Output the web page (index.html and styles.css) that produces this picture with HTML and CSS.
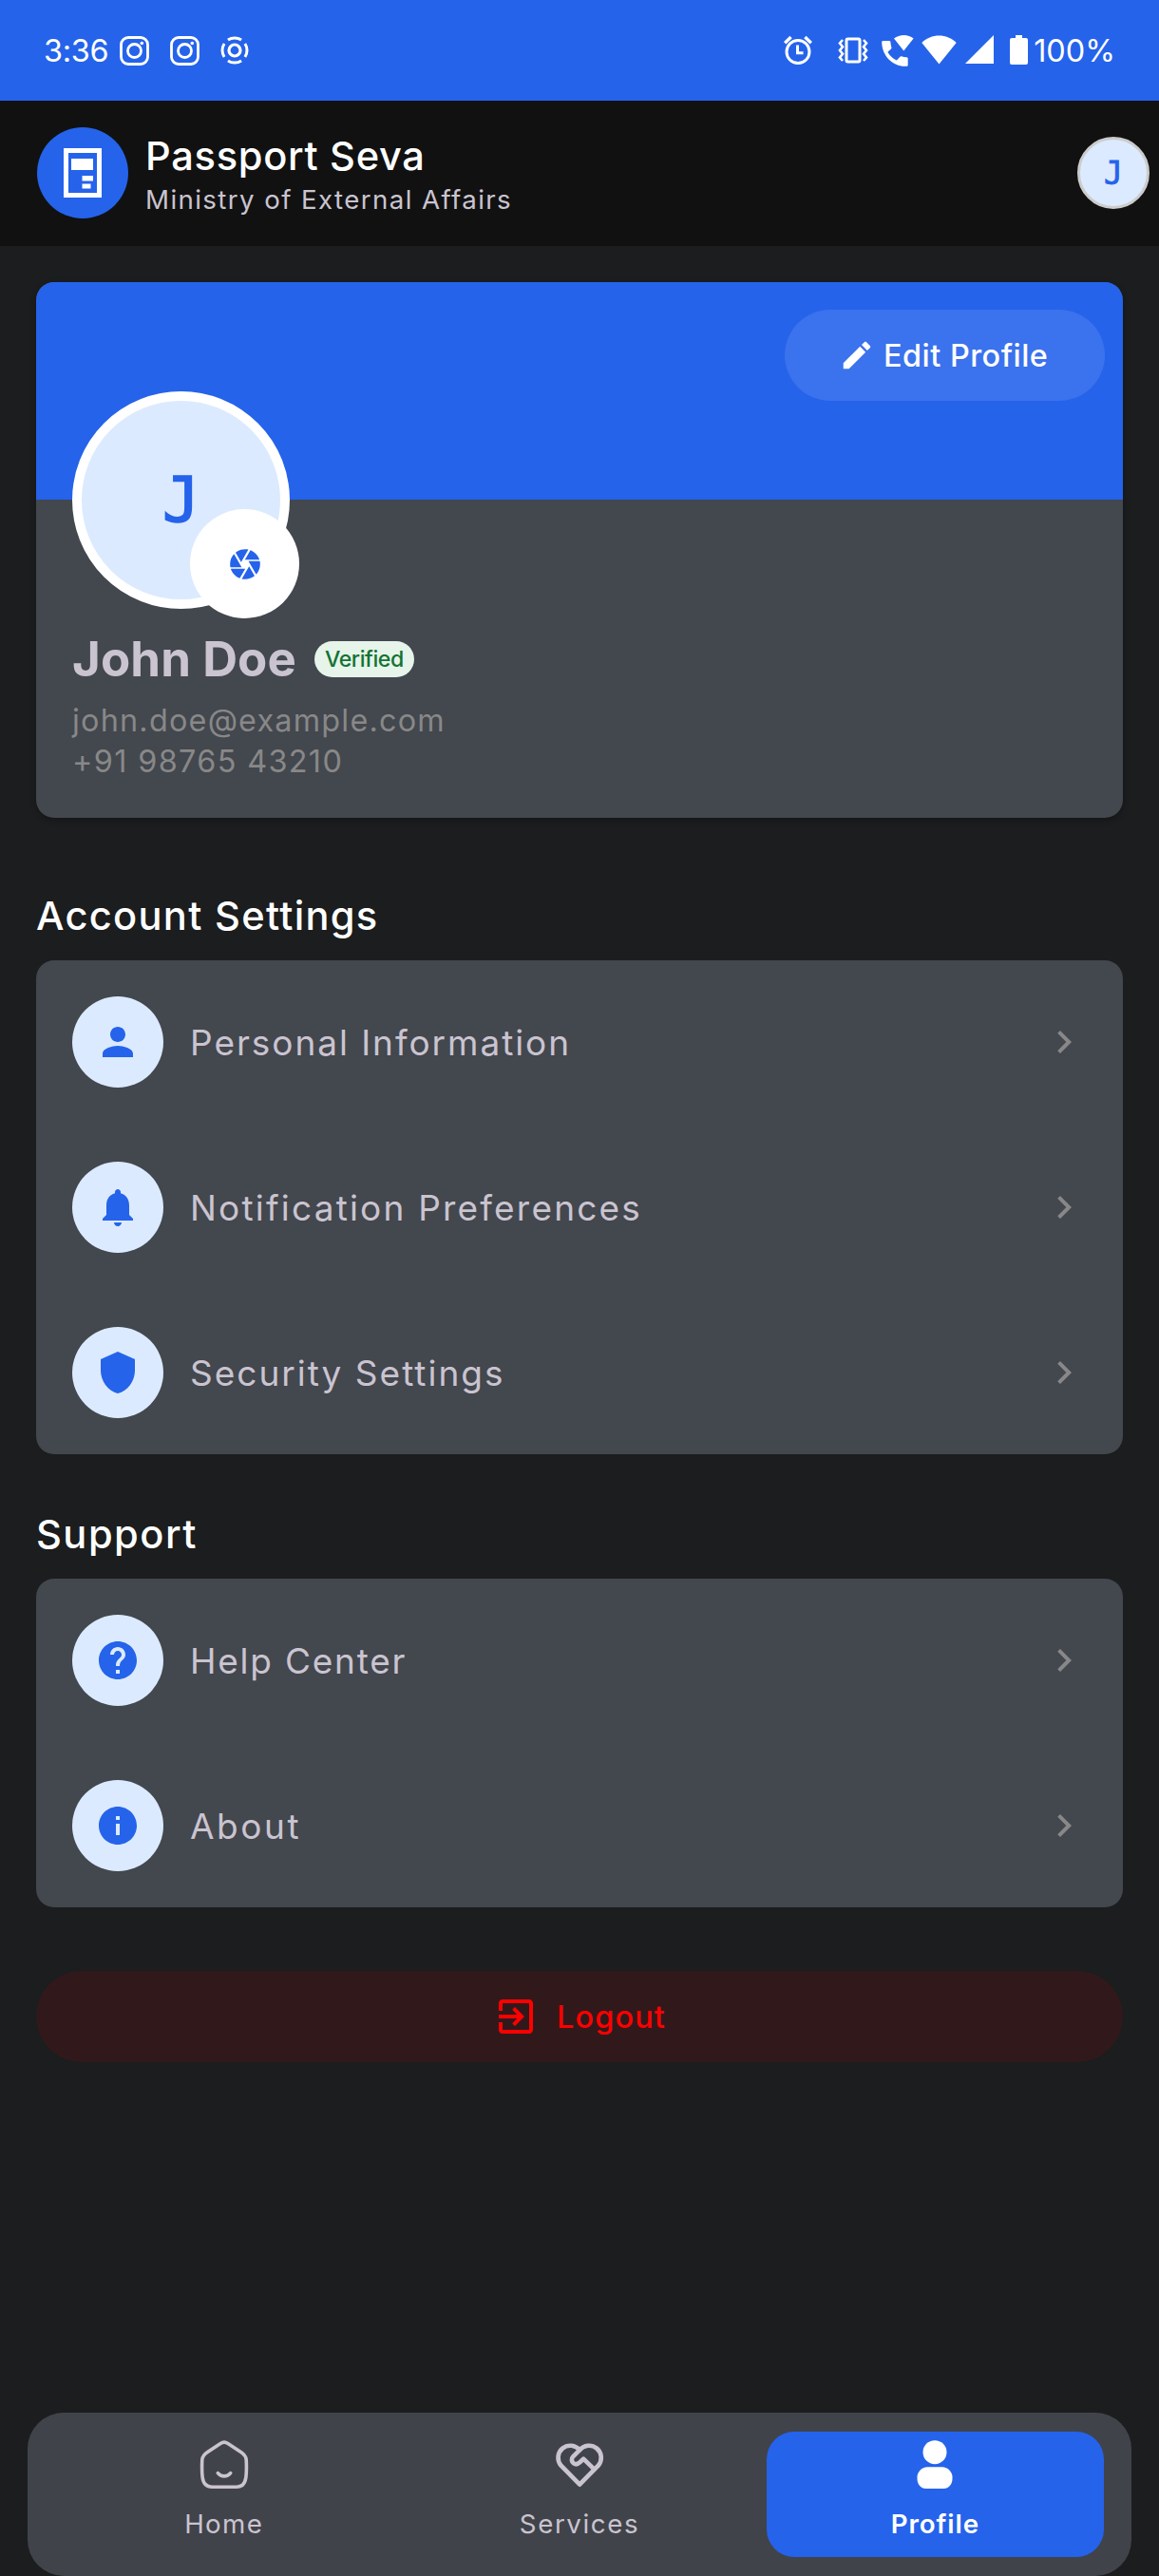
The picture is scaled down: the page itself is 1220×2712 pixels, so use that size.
FILE: index.html
```html
<!DOCTYPE html>
<html lang="en">
<head>
<meta charset="utf-8">
<title>Passport Seva – Profile</title>
<link rel="stylesheet" href="styles.css">
</head>
<body>
<div class="screen">
  <div class="status-bar">
    <span class="clock">3:36</span>
    <div class="notifications">
      <svg width="31" height="31" viewBox="0 0 31 31" fill="none" stroke="#fff" stroke-width="2.8"><rect x="1.5" y="1.5" width="28" height="28" rx="7.5"/><circle cx="15.5" cy="15.5" r="7"/><circle cx="23.3" cy="7.5" r="1.8" fill="#fff" stroke="none"/></svg>
      <svg width="31" height="31" viewBox="0 0 31 31" fill="none" stroke="#fff" stroke-width="2.8"><rect x="1.5" y="1.5" width="28" height="28" rx="7.5"/><circle cx="15.5" cy="15.5" r="7"/><circle cx="23.3" cy="7.5" r="1.8" fill="#fff" stroke="none"/></svg>
      <svg width="30" height="30" viewBox="0 0 30 30" fill="none" stroke="#fff"><circle cx="15" cy="15" r="6" stroke-width="3.2"/><circle cx="15" cy="15" r="13" stroke-width="3" pathLength="360" stroke-dasharray="66 24" stroke-dashoffset="33"/></svg>
    </div>
    <div class="indicators">
      <svg class="alarm" width="30" height="32" viewBox="0 0 30 32" fill="none" stroke="#fff"><circle cx="15" cy="17.5" r="12" stroke-width="3"/><path d="M14.5 10.5v8.2h6" stroke-width="3"/><path d="M1.2 8.2L7.6 2M28.8 8.2L22.4 2" stroke-width="3.4"/></svg>
      <svg class="vibrate" width="32" height="28" viewBox="0 0 32 28" fill="none" stroke="#fff" stroke-width="3"><rect x="9" y="2" width="14" height="24" rx="1.5"/><path d="M5 3L2 6.5l3 3.7-3 3.8 3 3.8-3 3.7L5 25M27 3l3 3.5-3 3.7 3 3.8-3 3.8 3 3.7-3 3.5" stroke-width="2.6"/></svg>
      <svg class="wifi-call" width="34" height="35" viewBox="0 0 34 35" fill="#fff"><path d="M1.5 7H8c.8 0 1.3.5 1.4 1.3.1 2 .5 3.900 1 5.600.200.500 0 1.100-.4 1.500l-3.600 3.300c2.500 4.400 5.400 6.900 9.500 8.900l3.500-3.900c.4-.4 1-.6 1.500-.4 1.700.500 3.600.9 5.500 1 .8.1 1.300.600 1.300 1.400v6.700c0 .800-.600 1.300-1.400 1.300C12.400 34.700.400 23 .200 8.400.200 7.600.700 7 1.500 7z"/><path d="M13 4.500C19 -.2 28 -.2 33.600 4.500L23.300 17.500z"/></svg>
      <svg class="wifi" width="37" height="31" viewBox="0 0 37 31" fill="#fff"><path d="M.3 8C10-2 27-2 36.700 8L18.500 30.500z"/></svg>
      <svg class="signal" width="30" height="30" viewBox="0 0 30 30" fill="#fff"><path d="M30 0v30H0z"/></svg>
      <svg class="battery" width="19" height="31" viewBox="0 0 19 31" fill="#fff"><path d="M6 0h7v3h4q2 0 2 2v24q0 2-2 2H2q-2 0-2-2V5q0-2 2-2h4z"/></svg>
      <span class="percent">100%</span>
    </div>
  </div>

  <header class="app-bar">
    <div class="logo">
      <svg width="40" height="52" viewBox="0 0 40 52" fill="#fff"><path fill-rule="evenodd" d="M0 0h40v52H0zM5 5v42h30V5z"/><path d="M8 11h23v12H8zM19.500 29H31v5.500H19.500zM19.500 37.500h9v5h-9z"/></svg>
    </div>
    <div class="brand">
      <div class="brand-title">Passport Seva</div>
      <div class="brand-subtitle">Ministry of External Affairs</div>
    </div>
    <div class="avatar-small">J</div>
  </header>

  <main class="content">
    <section class="profile-card">
      <div class="cover">
        <button class="edit-button">
          <svg width="38" height="38" viewBox="0 0 24 24" fill="#fff"><path d="M3 17.25V21h3.750L17.810 9.940l-3.750-3.750L3 17.250zM20.710 7.040c.390-.390.390-1.020 0-1.410l-2.340-2.340c-.390-.390-1.020-.390-1.410 0l-1.830 1.830 3.750 3.750 1.830-1.830z"/></svg>
          <span>Edit Profile</span>
        </button>
      </div>
      <div class="profile-body">
        <div class="avatar">J
          <div class="camera">
            <svg width="38" height="38" viewBox="0 0 24 24" fill="#2563eb"><path d="M9.400 10.500l4.770-8.260C13.470 2.090 12.750 2 12 2c-2.400 0-4.600.850-6.320 2.250l3.660 6.350.060-.1zM21.540 9c-.920-2.920-3.150-5.260-6-6.340L11.880 9h9.660zm.260 1h-7.490l.290.500 4.760 8.250C21 16.970 22 14.610 22 12c0-.690-.070-1.350-.2-2zM8.540 12l-3.900-6.750C3.010 7.030 2 9.390 2 12c0 .690.070 1.350.2 2h7.490l-1.150-2zm-6.080 3c.920 2.920 3.150 5.260 6 6.340L12.120 15H2.460zm11.270 0l-3.900 6.760c.7.150 1.420.240 2.170.240 2.400 0 4.600-.850 6.320-2.250l-3.660-6.350-.930 1.600z"/></svg>
          </div>
        </div>
        <div class="name-row">
          <h1 class="name">John Doe</h1>
          <span class="verified">Verified</span>
        </div>
        <div class="contact email">john.doe@example.com</div>
        <div class="contact phone">+91 98765 43210</div>
      </div>
    </section>

    <h2 class="section-title account-title">Account Settings</h2>
    <section class="list-card">
      <div class="row">
        <div class="row-icon"><svg width="48" height="48" viewBox="0 0 24 24"><path d="M12 12c2.210 0 4-1.790 4-4s-1.790-4-4-4-4 1.790-4 4 1.790 4 4 4zm0 2c-2.670 0-8 1.340-8 4v2h16v-2c0-2.660-5.330-4-8-4z"/></svg></div>
        <span class="row-label personal">Personal Information</span>
        <svg class="chevron" width="48" height="48" viewBox="0 0 24 24"><path d="M8.590 16.590L13.170 12 8.590 7.410 10 6l6 6-6 6z"/></svg>
      </div>
      <div class="row">
        <div class="row-icon"><svg width="48" height="48" viewBox="0 0 24 24"><path d="M12 22c1.100 0 2-.9 2-2h-4c0 1.100.890 2 2 2zm6-6v-5c0-3.070-1.640-5.640-4.500-6.320V4c0-.830-.670-1.500-1.500-1.500s-1.500.670-1.500 1.500v.680C7.630 5.360 6 7.920 6 11v5l-2 2v1h16v-1l-2-2z"/></svg></div>
        <span class="row-label">Notification Preferences</span>
        <svg class="chevron" width="48" height="48" viewBox="0 0 24 24"><path d="M8.590 16.590L13.170 12 8.590 7.410 10 6l6 6-6 6z"/></svg>
      </div>
      <div class="row">
        <div class="row-icon"><svg width="48" height="48" viewBox="0 0 24 24"><path d="M12 1L3 5v6c0 5.550 3.840 10.740 9 12 5.160-1.260 9-6.450 9-12V5l-9-4z"/></svg></div>
        <span class="row-label security">Security Settings</span>
        <svg class="chevron" width="48" height="48" viewBox="0 0 24 24"><path d="M8.590 16.590L13.170 12 8.590 7.410 10 6l6 6-6 6z"/></svg>
      </div>
    </section>

    <h2 class="section-title support-title">Support</h2>
    <section class="list-card">
      <div class="row">
        <div class="row-icon"><svg width="48" height="48" viewBox="0 0 24 24"><path d="M12 2C6.480 2 2 6.480 2 12s4.480 10 10 10 10-4.480 10-10S17.520 2 12 2zm1 17h-2v-2h2v2zm2.070-7.750l-.9.920C13.450 12.900 13 13.500 13 15h-2v-.5c0-1.100.450-2.100 1.170-2.830l1.240-1.260c.370-.360.590-.860.590-1.410 0-1.100-.9-2-2-2s-2 .9-2 2H8c0-2.210 1.790-4 4-4s4 1.790 4 4c0 .880-.360 1.680-.930 2.250z"/></svg></div>
        <span class="row-label help">Help Center</span>
        <svg class="chevron" width="48" height="48" viewBox="0 0 24 24"><path d="M8.590 16.590L13.170 12 8.590 7.410 10 6l6 6-6 6z"/></svg>
      </div>
      <div class="row">
        <div class="row-icon"><svg width="48" height="48" viewBox="0 0 24 24"><path d="M12 2C6.480 2 2 6.480 2 12s4.480 10 10 10 10-4.480 10-10S17.520 2 12 2zm1 15h-2v-6h2v6zm0-8h-2V7h2v2z"/></svg></div>
        <span class="row-label about">About</span>
        <svg class="chevron" width="48" height="48" viewBox="0 0 24 24"><path d="M8.590 16.590L13.170 12 8.590 7.410 10 6l6 6-6 6z"/></svg>
      </div>
    </section>

    <button class="logout">
      <svg width="48" height="48" viewBox="0 0 24 24" fill="#f00"><path d="M10.090 15.590L11.500 17l5-5-5-5-1.410 1.410L12.670 11H3v2h9.670l-2.580 2.590zM19 3H5c-1.110 0-2 .9-2 2v4h2V5h14v14H5v-4H3v4c0 1.100.890 2 2 2h14c1.100 0 2-.9 2-2V5c0-1.100-.9-2-2-2z"/></svg>
      <span>Logout</span>
    </button>
  </main>

  <nav class="bottom-nav">
    <div class="tab">
      <svg width="58" height="58" viewBox="0 0 58 58" fill="none" stroke="#cac4d0" stroke-width="3.600" stroke-linecap="round" stroke-linejoin="round"><path d="M25.500 6.300C27.800 4.700 30.200 4.700 32.500 6.300L46.500 15.500C50.500 18.200 52 20 52.200 23.500C52.600 31 52.600 36 51.900 42C51 49 48 52.200 42 52.200H16C10 52.200 7 49 6.100 42C5.400 36 5.400 31 5.800 23.500C6 20 7.500 18.200 11.500 15.500Z"/><path d="M22.300 37.600C26 42 32 42 35.700 37.600"/></svg>
      <span>Home</span>
    </div>
    <div class="tab">
      <svg width="58" height="58" viewBox="31.500 32 174 174" fill="none" stroke="#cac4d0" stroke-width="14" stroke-linecap="round" stroke-linejoin="round"><path d="M119 181L60 121A37.500 37.500 0 1 1 119 72A37.500 37.500 0 1 1 178 121Z"/><path d="M119 72L98 93C92 99 93 109 100 114C106 118 113 117 118 112L131 100L165 133"/></svg>
      <span class="services">Services</span>
    </div>
    <div class="tab active">
      <svg width="58" height="58" viewBox="0 0 58 58" fill="#fff"><circle cx="29" cy="15.700" r="12.500"/><path d="M21.500 31.300h15a11 11 0 0 1 11 12.200c0 6-4 10.500-9 10.500h-19c-5 0-9-4.500-9-10.500a11 11 0 0 1 11-12.200z"/></svg>
      <span>Profile</span>
    </div>
  </nav>
</div>
</body>
</html>
```
FILE: styles.css
```css
* {
  box-sizing: border-box;
}

body {
  margin: 0;
  background: #1a1c1e;
  font-family: Inter, "Liberation Sans", sans-serif;
  font-variant-ligatures: none;
}

svg {
  display: block;
  flex: none;
}

button {
  border: 0;
  font: inherit;
}

.screen {
  display: flex;
  flex-direction: column;
  width: 1220px;
  height: 2712px;
  overflow: hidden;
  background: #1b1d1e;
}

/* Status bar */
.status-bar {
  display: flex;
  align-items: center;
  flex: none;
  height: 106px;
  padding: 0 46px;
  background: #2563eb;
  color: #fff;
  font-size: 32.4px;
}

.clock {
  width: 80px;
  letter-spacing: -0.3px;
}

.notifications {
  display: flex;
  align-items: center;
  gap: 22px;
}

.indicators {
  display: flex;
  align-items: center;
  margin-left: auto;
}

.vibrate { margin-left: 27px; }
.wifi-call { margin-left: 14px; }
.wifi { margin-left: 8px; margin-top: -1px; }
.signal { margin-left: 9px; margin-top: -2px; }
.battery { margin-left: 17px; margin-top: -2px; }
.percent { margin-left: 6px; letter-spacing: 0; }

/* App bar */
.app-bar {
  display: flex;
  align-items: center;
  flex: none;
  height: 153px;
  padding: 0 10px 1px 39px;
  background: #111;
}

.logo {
  display: flex;
  align-items: center;
  justify-content: center;
  width: 96px;
  height: 96px;
  border-radius: 50%;
  background: #2563eb;
}

.brand {
  margin-left: 18px;
}

.brand-title {
  color: #fff;
  font-size: 41.6px;
  font-weight: 500;
  line-height: 56px;
  letter-spacing: 0.7px;
}

.brand-subtitle {
  color: #cac4d0;
  font-size: 27.7px;
  line-height: 36px;
  letter-spacing: 1.39px;
}

.avatar-small {
  width: 76px;
  height: 76px;
  margin-left: auto;
  border: 3px solid #ccc;
  border-radius: 50%;
  background: #dbeafe;
  color: #2563eb;
  font: 33px/72px "DejaVu Sans Mono", monospace;
  text-align: center;
  -webkit-text-stroke: 0.8px #2563eb;
}

/* Profile card */
.content {
  flex: 1;
  padding: 38px 38px 0;
}

.profile-card {
  height: 564px;
  border-radius: 19px;
  background: #43474e;
  box-shadow: 0 2px 6px rgba(0, 0, 0, 0.3);
}

.cover {
  display: flex;
  justify-content: flex-end;
  align-items: flex-start;
  height: 229px;
  padding: 29px 19px;
  border-radius: 19px 19px 0 0;
  background: #2563eb;
}

.edit-button {
  display: flex;
  align-items: center;
  gap: 9px;
  width: 337px;
  height: 96px;
  padding: 0 0 0 57px;
  border-radius: 48px;
  background: rgba(255, 255, 255, 0.1);
  color: #fff;
  font-size: 32.4px;
  font-weight: 500;
  letter-spacing: 0.5px;
}

.profile-body {
  padding: 0 38px;
}

.avatar {
  position: relative;
  width: 229px;
  height: 229px;
  margin-top: -114px;
  border: 10px solid #fff;
  border-radius: 50%;
  background: #dbeafe;
  color: #2563eb;
  font: 65px/209px "DejaVu Sans Mono", monospace;
  text-align: center;
  -webkit-text-stroke: 1.6px #2563eb;
}

.camera {
  position: absolute;
  right: -20px;
  bottom: -20px;
  display: flex;
  align-items: center;
  justify-content: center;
  width: 115px;
  height: 115px;
  border-radius: 50%;
  background: #fff;
}

.name-row {
  display: flex;
  align-items: center;
  gap: 19px;
  margin: 19px 0 10px;
}

.name {
  margin: 0;
  color: #cac4d0;
  font-size: 51px;
  font-weight: 700;
  line-height: 67px;
  letter-spacing: 0.1px;
}

.verified {
  width: 105px;
  height: 38px;
  border-radius: 19px;
  background: #e6f4ea;
  color: #137333;
  font-size: 23.1px;
  font-weight: 500;
  line-height: 38px;
  letter-spacing: -0.42px;
  text-align: center;
}

.contact {
  color: #888;
  font-size: 32.4px;
  line-height: 43px;
}

.email { letter-spacing: 1.2px; }
.phone { letter-spacing: 1.35px; }

/* Lists */
.section-title {
  margin: 0;
  color: #fff;
  font-size: 41.6px;
  font-weight: 500;
  line-height: 58px;
}

.account-title {
  margin: 74px 0 18px;
  letter-spacing: 1.3px;
}

.support-title {
  margin: 55px 0 18px;
  letter-spacing: 1.5px;
}

.list-card {
  display: flex;
  flex-direction: column;
  gap: 2px;
  border-radius: 19px;
  background: #43474e;
}

.row {
  display: flex;
  align-items: center;
  height: 172px;
  padding: 0 38px;
}

.row-icon {
  display: flex;
  align-items: center;
  justify-content: center;
  width: 96px;
  height: 96px;
  border-radius: 50%;
  background: #dbeafe;
  fill: #2563eb;
}

.row-label {
  flex: 1;
  padding-top: 2px;
  margin-left: 28px;
  color: #cac4d0;
  font-size: 37px;
  line-height: 48px;
  letter-spacing: 2.2px;
}

.personal { letter-spacing: 1.95px; }
.security { letter-spacing: 2px; }
.help { letter-spacing: 1.76px; }
.about { letter-spacing: 2.56px; }

.chevron {
  fill: #888;
}

/* Logout */
.logout {
  display: flex;
  align-items: center;
  justify-content: center;
  gap: 19px;
  width: 100%;
  height: 96px;
  margin-top: 67px;
  border-radius: 48px;
  background: #31191b;
  color: #f00;
  font-size: 32.4px;
  font-weight: 500;
  letter-spacing: 1.2px;
}

/* Bottom navigation */
.bottom-nav {
  display: grid;
  grid-template-columns: repeat(3, 1fr);
  gap: 19px;
  flex: none;
  height: 172px;
  margin: 0 29px;
  padding: 20px 29px;
  border-radius: 38px;
  background: #40434a;
}

.tab {
  display: flex;
  flex-direction: column;
  align-items: center;
  gap: 16px;
  padding-top: 6px;
  border-radius: 29px;
  color: #cac4d0;
  font-size: 27.7px;
  line-height: 34px;
  letter-spacing: 1.36px;
}

.services { letter-spacing: 1.6px; }

.active {
  background: #2563eb;
  color: #fff;
  font-weight: 600;
  letter-spacing: 0.9px;
}
```
